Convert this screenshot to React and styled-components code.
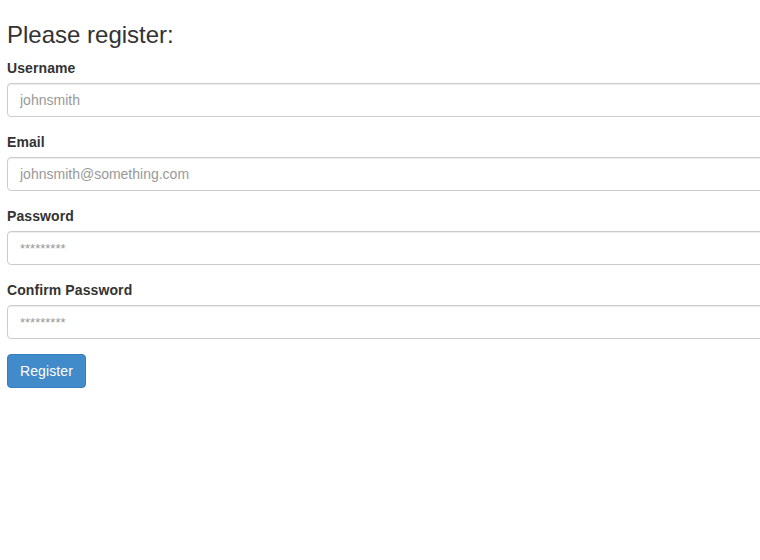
import styled, { createGlobalStyle } from 'styled-components';

const GlobalStyle = createGlobalStyle`
  html, body {
    margin: 0;
    padding: 0;
    background: #fff;
    overflow: hidden;
  }
  body {
    font-family: "Liberation Sans", Arial, sans-serif;
    font-size: 14px;
    line-height: 1.428571429;
    color: #333;
  }
  * { box-sizing: border-box; }
`;

const Viewport = styled.div`
  width: 100%;
  overflow: hidden;
`;

const Page = styled.div`
  width: 800px;
  padding: 0 0 0 7px;
`;

const Heading = styled.h3`
  margin: 22px 0 10px;
  font-size: 24px;
  font-weight: 400;
  line-height: 1.1;
  color: #333;
`;

const FormGroup = styled.div`
  margin-bottom: 15px;
`;

const Label = styled.label`
  display: block;
  margin-bottom: 5px;
  font-weight: 700;
  letter-spacing: 0.1px;
  color: #333;
`;

const Input = styled.input`
  display: block;
  width: 100%;
  height: 34px;
  padding: 6px 12px;
  font-family: inherit;
  font-size: 14px;
  line-height: 1.428571429;
  color: #555;
  background: #fff;
  border: 1px solid #ccc;
  border-radius: 4px;
  box-shadow: inset 0 1px 1px rgba(0, 0, 0, 0.075);
  outline: none;

  &::placeholder {
    color: #999;
    font-size: ${(p) => (p.$stars ? '13px' : '14px')};
  }
`;

const Button = styled.button`
  display: inline-block;
  height: 34px;
  padding: 6px 12px;
  font-family: inherit;
  font-size: 14px;
  line-height: 1.428571429;
  letter-spacing: 0.1px;
  color: #fff;
  background: #428bca;
  border: 1px solid #357ebd;
  border-radius: 4px;
  cursor: pointer;
`;

const fields = [
  { label: 'Username', placeholder: 'johnsmith' },
  { label: 'Email', placeholder: 'johnsmith@something.com' },
  { label: 'Password', placeholder: '*********', stars: true },
  { label: 'Confirm Password', placeholder: '*********', stars: true },
];

export default function App() {
  return (
    <>
      <GlobalStyle />
      <Viewport>
        <Page>
          <Heading>Please register:</Heading>
          {fields.map((f) => (
            <FormGroup key={f.label}>
              <Label>{f.label}</Label>
              <Input placeholder={f.placeholder} $stars={f.stars} />
            </FormGroup>
          ))}
          <Button>Register</Button>
        </Page>
      </Viewport>
    </>
  );
}
